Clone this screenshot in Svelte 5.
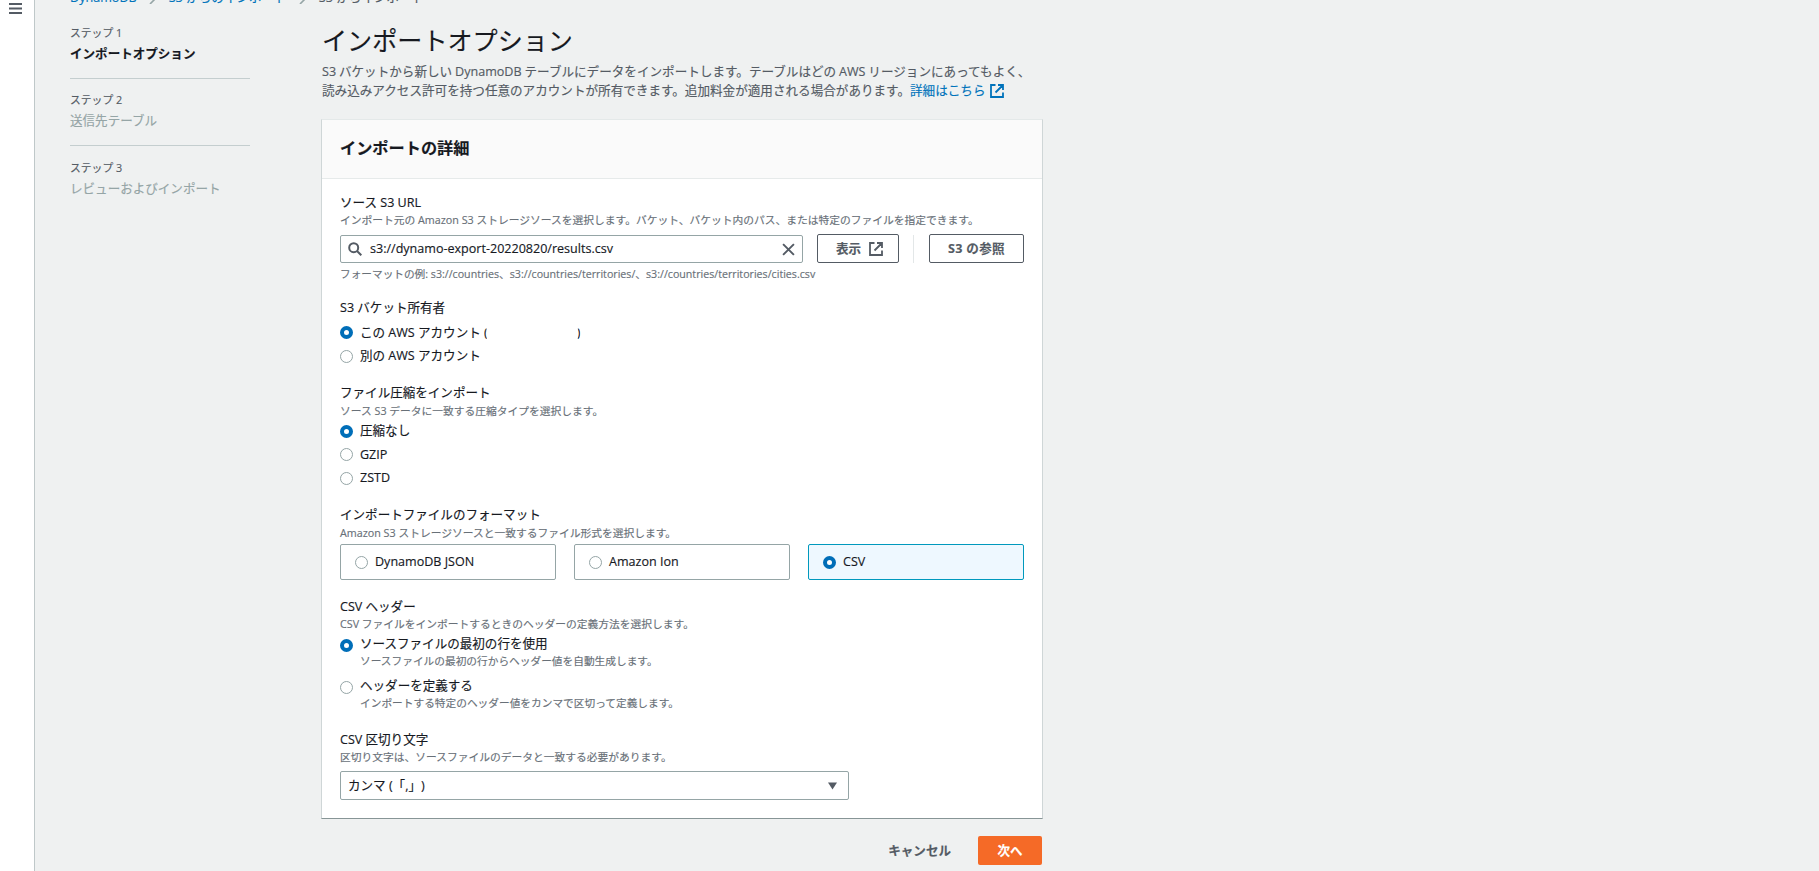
<script>
	let steps = [
		{ title: 'インポートオプション', active: true },
		{ title: '送信先テーブル', active: false },
		{ title: 'レビューおよびインポート', active: false }
	];

	let url = 's3://dynamo-export-20220820/results.csv';
	let owner = 'self';
	let compression = 'none';
	let format = 'csv';
	let header = 'first';

	const owners = [
		{ value: 'self', label: 'この AWS アカウント', hidden: true },
		{ value: 'other', label: '別の AWS アカウント' }
	];
	const compressions = [
		{ value: 'none', label: '圧縮なし' },
		{ value: 'gzip', label: 'GZIP' },
		{ value: 'zstd', label: 'ZSTD' }
	];
	const formats = [
		{ value: 'json', label: 'DynamoDB JSON' },
		{ value: 'ion', label: 'Amazon Ion' },
		{ value: 'csv', label: 'CSV' }
	];
	const headers = [
		{
			value: 'first',
			label: 'ソースファイルの最初の行を使用',
			text: 'ソースファイルの最初の行からヘッダー値を自動生成します。'
		},
		{
			value: 'define',
			label: 'ヘッダーを定義する',
			text: 'インポートする特定のヘッダー値をカンマで区切って定義します。'
		}
	];
</script>

<div class="app">
	<aside class="rail">
		<svg class="menu" viewBox="0 0 13 13"><path d="M0 2h13M0 6.5h13M0 11h13" /></svg>
	</aside>

	<div class="page">
		<nav class="crumbs">
			<a href="#top">DynamoDB</a>
			<svg viewBox="0 0 8 12"><path d="M1 0l6 6-6 6" /></svg>
			<a href="#top">S3 からのインポート</a>
			<svg viewBox="0 0 8 12"><path d="M1 0l6 6-6 6" /></svg>
			<span>S3 からインポート</span>
		</nav>

		<div class="columns">
			<ol class="steps">
				{#each steps as step, i}
					<li class:active={step.active}>
						<small>ステップ {i + 1}</small>
						<span>{step.title}</span>
					</li>
				{/each}
			</ol>

			<main>
				<h1>インポートオプション</h1>
				<p class="intro">
					S3 バケットから新しい DynamoDB テーブルにデータをインポートします。テーブルはどの AWS リージョンにあってもよく、<br
					/>読み込みアクセス許可を持つ任意のアカウントが所有できます。追加料金が適用される場合があります。<a
						href="#top"
						>詳細はこちら<svg class="external" viewBox="0 0 14 14"
							><path d="M5.5 1H1v12h12V8.5M8 1h5v5M13 1L5.5 8.5" /></svg
						></a
					>
				</p>

				<section class="card">
					<header><h2>インポートの詳細</h2></header>
					<div class="body">
						<div class="field source">
							<h3>ソース S3 URL</h3>
							<p class="hint">
								インポート元の Amazon S3 ストレージソースを選択します。バケット、バケット内のパス、または特定のファイルを指定できます。
							</p>
							<div class="source-row">
								<div class="search">
									<svg class="lens" viewBox="0 0 14 14"
										><circle cx="5.7" cy="5.7" r="4.5" /><path d="M9 9l4.3 4.3" /></svg
									>
									<input bind:value={url} spellcheck="false" />
									<svg class="clear" viewBox="0 0 12 12"><path d="M1 1l10 10M11 1L1 11" /></svg>
								</div>
								<button class="view"
									>表示<svg class="external" viewBox="0 0 14 14"
										><path d="M5.5 1H1v12h12V8.5M8 1h5v5M13 1L5.5 8.5" /></svg
									></button
								>
								<i class="divider"></i>
								<button class="browse">S3 の参照</button>
							</div>
							<p class="hint example">
								フォーマットの例: s3://countries、s3://countries/territories/、s3://countries/territories/cities.csv
							</p>
						</div>

						<div class="field owner">
							<h3>S3 バケット所有者</h3>
							{#each owners as item}
								<label class="radio">
									<input type="radio" value={item.value} bind:group={owner} />
									<span
										>{item.label}{#if item.hidden}&nbsp;<b class="open">(</b><i class="account"></i><b
												class="close">)</b
											>{/if}</span
									>
								</label>
							{/each}
						</div>

						<div class="field compression">
							<h3>ファイル圧縮をインポート</h3>
							<p class="hint">ソース S3 データに一致する圧縮タイプを選択します。</p>
							{#each compressions as item}
								<label class="radio">
									<input type="radio" value={item.value} bind:group={compression} />
									<span>{item.label}</span>
								</label>
							{/each}
						</div>

						<div class="field format">
							<h3>インポートファイルのフォーマット</h3>
							<p class="hint">Amazon S3 ストレージソースと一致するファイル形式を選択します。</p>
							<div class="tiles">
								{#each formats as item}
									<label class="tile" class:selected={format === item.value}>
										<input type="radio" value={item.value} bind:group={format} />
										<span>{item.label}</span>
									</label>
								{/each}
							</div>
						</div>

						<div class="field csv-header">
							<h3>CSV ヘッダー</h3>
							<p class="hint">CSV ファイルをインポートするときのヘッダーの定義方法を選択します。</p>
							{#each headers as item}
								<label class="radio tall">
									<input type="radio" value={item.value} bind:group={header} />
									<span>{item.label}<small>{item.text}</small></span>
								</label>
							{/each}
						</div>

						<div class="field delimiter">
							<h3>CSV 区切り文字</h3>
							<p class="hint">区切り文字は、ソースファイルのデータと一致する必要があります。</p>
							<div class="select">
								<span>カンマ (「,」)</span>
								<svg viewBox="0 0 9 8"><path d="M0 0.5h9L4.5 7.5z" /></svg>
							</div>
						</div>
					</div>
				</section>

				<footer>
					<button class="cancel">キャンセル</button>
					<button class="next">次へ</button>
				</footer>
			</main>
		</div>
	</div>
</div>

<style>
	:global(body) {
		background: #eff1f1;
		overflow: hidden;
	}
	.app {
		display: flex;
		height: 871px;
		overflow: hidden;
		font-family: 'Open Sans', 'Noto Sans CJK JP', sans-serif;
		font-size: 12.55px;
		line-height: 20px;
		text-spacing-trim: space-all;
		-webkit-text-stroke: 0.15px;
		color: #16191f;
	}
	h1,
	h2,
	h3,
	p,
	ol {
		margin: 0;
		padding: 0;
		font-weight: 400;
	}
	a {
		color: #0073bb;
		text-decoration: none;
	}
	svg {
		fill: none;
		stroke: currentColor;
		flex: none;
	}
	.rail {
		box-sizing: border-box;
		width: 35px;
		flex: none;
		padding: 2px 0 0 9px;
		background: #fff;
		border-right: 1px solid #bfc8c9;
		color: #545b64;
	}
	.menu {
		display: block;
		width: 13px;
		height: 13px;
		stroke-width: 1.8;
	}
	.page {
		padding-left: 35px;
	}
	.crumbs {
		display: flex;
		align-items: center;
		height: 20px;
		margin-top: -12px;
		font-size: 12.6px;
		color: #545b64;
		white-space: nowrap;
	}
	.crumbs svg {
		width: 8px;
		height: 12px;
		margin: 0 12px;
		color: #95a5a6;
		stroke-width: 1.6;
	}
	.columns {
		display: flex;
		gap: 71px;
		padding-top: 15px;
	}
	.steps {
		width: 180px;
		list-style: none;
	}
	.steps li {
		display: flex;
		flex-direction: column;
		color: #95a5a6;
	}
	.steps li:not(:last-child) {
		box-sizing: border-box;
		height: 56px;
		margin-bottom: 11px;
		border-bottom: 1px solid #c4cecf;
	}
	.steps li:last-child {
		padding-top: 1px;
	}
	.steps small {
		font-size: 10.8px;
		line-height: 20px;
		color: #545b64;
	}
	.steps span {
		line-height: 21px;
	}
	.steps .active span {
		font-weight: 700;
		color: #16191f;
	}
	main {
		width: 722px;
	}
	h1 {
		padding-left: 1px;
		font-size: 25.1px;
		line-height: 34px;
	}
	.intro {
		margin-top: 5px;
		padding-left: 1px;
		font-size: 12.59px;
		line-height: 19px;
		word-spacing: -0.4px;
		color: #545b64;
		white-space: nowrap;
	}
	.external {
		width: 14px;
		height: 14px;
		stroke-width: 1.8;
	}
	.intro .external {
		margin-left: 4px;
		vertical-align: -3px;
	}
	.card {
		box-sizing: border-box;
		height: 700px;
		margin-top: 19px;
		background: #fff;
		border: 1px solid #cfd6d7;
		border-top-color: #e4e9e9;
		border-bottom-color: #879596;
	}
	.card header {
		height: 58px;
		background: #fafafa;
		border-bottom: 1px solid #e6eaea;
	}
	h2 {
		padding: 16px 18px;
		font-size: 16.2px;
		line-height: 24px;
		font-weight: 700;
	}
	.body {
		padding: 14px 18px 0;
	}
	h3 {
		font-size: 12.55px;
		line-height: 20px;
	}
	.hint {
		font-size: 10.75px;
		line-height: 16px;
		color: #687078;
		white-space: nowrap;
	}
	.source .hint {
		line-height: 15px;
	}
	.source-row {
		display: flex;
		align-items: flex-end;
		margin-top: 6px;
		height: 29px;
	}
	.search {
		box-sizing: border-box;
		display: flex;
		align-items: center;
		width: 463px;
		height: 28px;
		padding: 0 7px;
		border: 1px solid #95a5a6;
		border-radius: 2px;
		color: #545b64;
	}
	.lens {
		width: 14px;
		height: 14px;
		stroke-width: 2;
	}
	.search input {
		flex: 1;
		padding: 0 0 0 8px;
		border: 0;
		outline: 0;
		background: none;
		font: inherit;
		color: #16191f;
	}
	.clear {
		width: 13px;
		height: 13px;
		stroke-width: 1.8;
	}
	button {
		box-sizing: border-box;
		display: flex;
		align-items: center;
		justify-content: center;
		height: 29px;
		padding: 0;
		border: 1px solid #545b64;
		border-radius: 2px;
		background: none;
		font: inherit;
		font-weight: 700;
		color: #545b64;
	}
	.view {
		width: 82px;
		margin-left: 14px;
		padding-left: 3px;
		gap: 8px;
	}
	.divider {
		width: 1px;
		height: 28px;
		margin: 0 15px 0 14px;
		background: #e3e7e8;
	}
	.browse {
		width: 95px;
		letter-spacing: 0.3px;
	}
	.hint.example {
		margin-top: 3px;
		font-size: 10.67px;
		line-height: 16px;
	}
	.field + .field {
		margin-top: 16px;
	}
	.radio {
		display: flex;
		align-items: center;
		height: 18px;
		margin-top: 5.5px;
		line-height: 18px;
		white-space: nowrap;
	}
	.hint + .radio {
		margin-top: 3px;
	}
	input[type='radio'] {
		appearance: none;
		box-sizing: border-box;
		width: 13px;
		height: 13px;
		margin: 0;
		flex: none;
		border: 1px solid #95a5a6;
		border-radius: 50%;
		background: #fff;
	}
	input[type='radio']:checked {
		border: 4px solid #006eb8;
	}
	.radio span {
		margin-left: 7px;
	}
	.open,
	.close {
		display: inline-block;
		font-weight: inherit;
	}
	.open {
		clip-path: inset(5px 1px 0 0);
	}
	.close {
		clip-path: inset(5px 0 0 1px);
	}
	.account {
		display: inline-block;
		width: 89px;
	}
	.field.compression {
		margin-top: 18px;
	}
	.field.format {
		margin-top: 18px;
	}
	.tiles {
		display: grid;
		grid-template-columns: repeat(3, 1fr);
		gap: 18px;
		margin-top: 3px;
	}
	.tile {
		box-sizing: border-box;
		display: flex;
		align-items: center;
		gap: 7px;
		height: 36px;
		padding: 0 14px;
		border: 1px solid #95a5a6;
		border-radius: 2px;
	}
	.tile.selected {
		border-color: #0099bd;
		background: #eef8ff;
	}
	.field.csv-header {
		margin-top: 17px;
	}
	.csv-header .hint {
		line-height: 15px;
	}
	.radio.tall {
		align-items: flex-start;
		height: 36px;
	}
	.tall input {
		margin-top: 4px;
	}
	.tall small {
		display: block;
		font-size: 10.7px;
		line-height: 17px;
		color: #687078;
	}
	.field.delimiter {
		margin-top: 17.5px;
	}
	.delimiter .hint {
		line-height: 15px;
	}
	.select {
		box-sizing: border-box;
		display: flex;
		align-items: center;
		justify-content: space-between;
		width: 509px;
		height: 29px;
		margin-top: 6px;
		padding: 0 11px 0 7px;
		border: 1px solid #95a5a6;
		border-radius: 2px;
	}
	.select span {
		font-kerning: none;
	}
	.select svg {
		width: 9px;
		height: 8px;
		fill: #545b64;
		stroke: none;
	}
	footer {
		display: flex;
		justify-content: flex-end;
		gap: 27px;
		margin-top: 17px;
		padding-right: 1px;
	}
	.cancel {
		border: 0;
	}
	.next {
		width: 64px;
		border: 0;
		background: #f56a27;
		color: #fff;
	}
</style>
